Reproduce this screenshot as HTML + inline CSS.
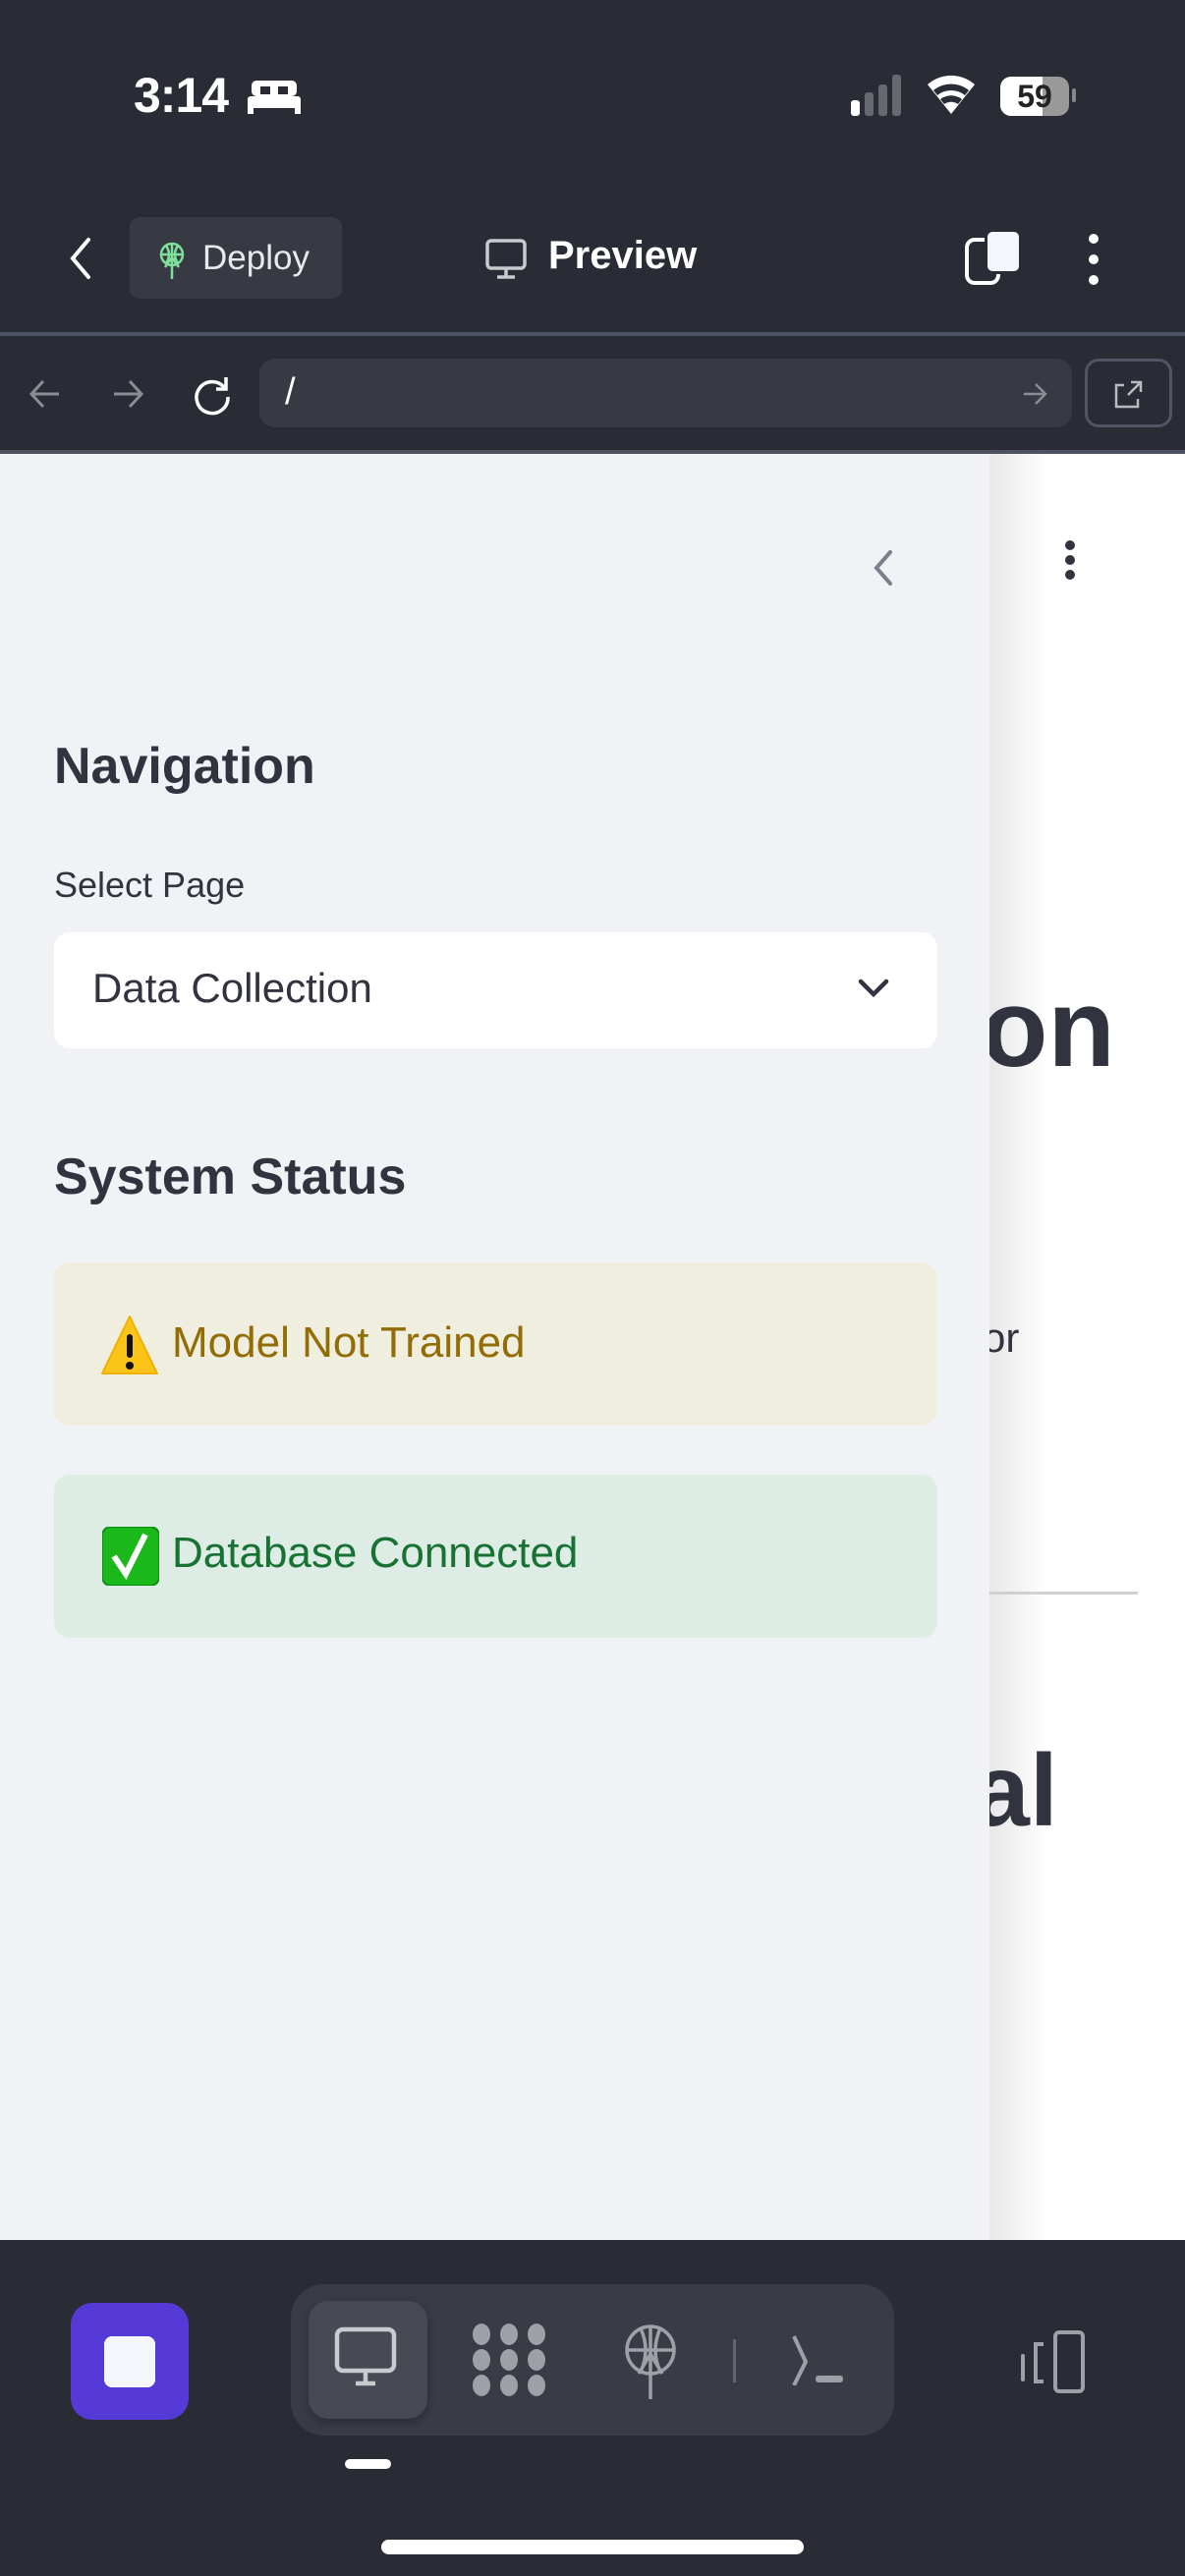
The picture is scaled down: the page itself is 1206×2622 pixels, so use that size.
<!DOCTYPE html>
<html><head><meta charset="utf-8"><style>
*{margin:0;padding:0;box-sizing:border-box}
body{width:1206px;height:2622px;overflow:hidden;background:#292c34;font-family:"Liberation Sans",sans-serif;position:relative}
.a{position:absolute}
.t{white-space:nowrap}
</style></head><body>
<!-- status bar -->
<div class="a t" style="left:136px;top:68px;font-size:50px;font-weight:bold;color:#fff;letter-spacing:-1px">3:14</div>
<svg class="a" style="left:252px;top:80px" width="54" height="38" viewBox="0 0 54 38"><rect x="4" y="2" width="46" height="16" rx="5" fill="#fff"/><rect x="13" y="8" width="10" height="8" fill="#292c34"/><rect x="31" y="8" width="10" height="8" fill="#292c34"/><rect x="0" y="18" width="54" height="12" rx="3" fill="#fff"/><rect x="0" y="26" width="6" height="10" fill="#fff"/><rect x="48" y="26" width="6" height="10" fill="#fff"/></svg>
<svg class="a" style="left:864px;top:74px" width="60" height="46"><rect x="2" y="28" width="9" height="16" rx="3" fill="#fff"/><rect x="16" y="20" width="9" height="24" rx="3" fill="#666a70"/><rect x="30" y="12" width="9" height="32" rx="3" fill="#666a70"/><rect x="44" y="2" width="9" height="42" rx="3" fill="#666a70"/></svg>
<svg class="a" style="left:942px;top:72px" width="52" height="46" viewBox="0 0 52 46"><path d="M26 44 L2 14 A36 36 0 0 1 50 14 Z" fill="#fff"/><path d="M8 20 A28 28 0 0 1 44 20 L40 25 A22 22 0 0 0 12 25Z" fill="#292c34"/><path d="M15 29 A18 18 0 0 1 37 29 L33 34 A12 12 0 0 0 19 34Z" fill="#292c34"/></svg>
<div class="a" style="left:1018px;top:78px;width:70px;height:40px;border-radius:11px;background:#999;overflow:hidden"><div style="width:43px;height:40px;background:#fff"></div></div>
<div class="a" style="left:1091px;top:90px;width:4px;height:14px;border-radius:2px;background:#888"></div>
<div class="a t" style="left:1018px;top:80px;width:70px;text-align:center;font-size:32px;font-weight:bold;color:#222">59</div>
<!-- toolbar -->
<svg class="a" style="left:66px;top:240px" width="30" height="46"><path d="M24 4 L8 23 L24 42" stroke="#fff" stroke-width="4" fill="none" stroke-linecap="round"/></svg>
<div class="a" style="left:132px;top:221px;width:216px;height:83px;border-radius:10px;background:#373a43"></div>
<svg class="a" style="left:160px;top:246px" width="30" height="40" viewBox="0 0 30 40"><circle cx="15" cy="13" r="11" stroke="#7ee19a" stroke-width="2.5" fill="none"/><path d="M4 13 H26 M15 2 V38 M9 4 Q15 13 9 22 M21 4 Q15 13 21 22 M8 26 L15 16 L22 26" stroke="#7ee19a" stroke-width="2.5" fill="none"/></svg>
<div class="a t" style="left:206px;top:243px;font-size:35px;color:#e8e9ec">Deploy</div>
<svg class="a" style="left:494px;top:243px" width="42" height="42"><rect x="2" y="2" width="38" height="28" rx="4" stroke="#c8cacd" stroke-width="3.5" fill="none"/><path d="M21 30 V38 M12 39 H30" stroke="#c8cacd" stroke-width="3.5"/></svg>
<div class="a t" style="left:558px;top:238px;font-size:40px;font-weight:bold;color:#fff">Preview</div>
<div class="a" style="left:982px;top:242px;width:36px;height:48px;border:4px solid #fff;border-radius:10px"></div>
<div class="a" style="left:1002px;top:233px;width:38px;height:46px;background:#f3f6fb;border-radius:8px;border:3px solid #292c34"></div>
<div class="a" style="left:1108px;top:238px;width:10px;height:10px;border-radius:50%;background:#fff;box-shadow:0 21px 0 #fff,0 42px 0 #fff"></div>
<div class="a" style="left:0;top:338px;width:1206px;height:4px;background:#4d5262"></div>
<!-- url row -->
<svg class="a" style="left:28px;top:384px" width="36" height="34"><path d="M32 17 H4 M16 4 L4 17 L16 30" stroke="#8a8d93" stroke-width="3" fill="none"/></svg>
<svg class="a" style="left:112px;top:384px" width="36" height="34"><path d="M4 17 H32 M20 4 L32 17 L20 30" stroke="#8a8d93" stroke-width="3" fill="none"/></svg>
<svg class="a" style="left:194px;top:380px" width="44" height="44"><path d="M34 14 A16 16 0 1 0 38 24" stroke="#fff" stroke-width="3.5" fill="none"/><path d="M36 4 V16 H26" stroke="#fff" stroke-width="3.5" fill="none"/></svg>
<div class="a" style="left:264px;top:365px;width:827px;height:70px;border-radius:16px;background:#373a43"></div>
<div class="a t" style="left:290px;top:378px;font-size:38px;color:#fff">/</div>
<svg class="a" style="left:1040px;top:388px" width="26" height="26"><path d="M2 13 H24 M14 3 L24 13 L14 23" stroke="#8a8d93" stroke-width="2.5" fill="none"/></svg>
<div class="a" style="left:1104px;top:365px;width:89px;height:70px;border-radius:14px;border:3px solid #505564"></div>
<svg class="a" style="left:1132px;top:386px" width="32" height="32"><path d="M12 6 H4 V28 H26 V20 M16 16 L29 3 M19 3 H29 V13" stroke="#b8bac0" stroke-width="2.5" fill="none"/></svg>
<div class="a" style="left:0;top:458px;width:1206px;height:4px;background:#4d5262"></div>
<!-- main page -->
<div class="a" style="left:0;top:462px;width:1206px;height:1818px;background:#fff;overflow:hidden">
 <div class="a" style="left:1007px;top:0;width:60px;height:1818px;background:linear-gradient(90deg,#e8e8ea,#fff)"></div>
 <div class="a" style="left:1084px;top:88px;width:10px;height:10px;border-radius:50%;background:#31333f;box-shadow:0 15px 0 #31333f,0 30px 0 #31333f"></div>
 <div class="a t" style="left:998px;top:520px;font-size:112px;font-weight:bold;color:#31333f">on</div>
 <div class="a t" style="left:1000px;top:876px;font-size:42px;color:#31333f">or</div>
 <div class="a" style="left:1007px;top:1158px;width:151px;height:3px;background:#d0d0d2"></div>
 <div class="a t" style="left:990px;top:1302px;font-size:104px;font-weight:bold;color:#31333f">al</div>
</div>
<!-- sidebar -->
<div class="a" style="left:0;top:462px;width:1007px;height:1818px;background:#f0f2f6">
 <svg class="a" style="left:886px;top:96px" width="26" height="40"><path d="M20 4 L6 20 L20 36" stroke="#7d808a" stroke-width="4" fill="none" stroke-linecap="round"/></svg>
 <div class="a t" style="left:55px;top:288px;font-size:52px;font-weight:bold;color:#31333f">Navigation</div>
 <div class="a t" style="left:55px;top:418px;font-size:36px;color:#31333f">Select Page</div>
 <div class="a" style="left:55px;top:487px;width:899px;height:118px;background:#fff;border-radius:16px"></div>
 <div class="a t" style="left:94px;top:520px;font-size:42px;color:#31333f">Data Collection</div>
 <svg class="a" style="left:872px;top:532px" width="34" height="24"><path d="M4 5 L17 18 L30 5" stroke="#31333f" stroke-width="4.5" fill="none" stroke-linecap="round"/></svg>
 <div class="a t" style="left:55px;top:706px;font-size:52px;font-weight:bold;color:#31333f">System Status</div>
 <div class="a" style="left:55px;top:823px;width:899px;height:166px;background:#f0efdf;border-radius:16px"></div>
 <svg class="a" style="left:102px;top:876px" width="60" height="62"><path d="M30 2 L58 60 H2 Z" fill="#fcc419" stroke="#f0b000" stroke-width="2" stroke-linejoin="round"/><rect x="27" y="20" width="6" height="24" rx="3" fill="#111"/><circle cx="30" cy="52" r="4" fill="#111"/></svg>
 <div class="a t" style="left:175px;top:880px;font-size:44px;color:#926c05">Model Not Trained</div>
 <div class="a" style="left:55px;top:1039px;width:899px;height:166px;background:#ddece4;border-radius:16px"></div>
 <svg class="a" style="left:104px;top:1092px" width="58" height="60"><rect x="0" y="0" width="58" height="60" rx="9" fill="#1ab81a" stroke="#109010" stroke-width="2"/><path d="M12 30 L24 48 L44 8" stroke="#fff" stroke-width="6" fill="none"/></svg>
 <div class="a t" style="left:175px;top:1094px;font-size:44px;color:#177233">Database Connected</div>
</div>
<!-- bottom bar -->
<div class="a" style="left:72px;top:2344px;width:120px;height:119px;border-radius:22px;background:#553ad8"></div>
<div class="a" style="left:106px;top:2378px;width:52px;height:52px;border-radius:8px;background:#f3f6fb"></div>
<div class="a" style="left:296px;top:2325px;width:614px;height:154px;border-radius:34px;background:#393c45"></div>
<div class="a" style="left:314px;top:2342px;width:121px;height:120px;border-radius:20px;background:#474a53;box-shadow:0 4px 10px rgba(0,0,0,.25)"></div>
<svg class="a" style="left:340px;top:2368px" width="66" height="64"><rect x="3" y="3" width="58" height="42" rx="6" stroke="#c8cacd" stroke-width="4.5" fill="none"/><path d="M32 45 V56 M22 58 H42" stroke="#c8cacd" stroke-width="4.5"/></svg>
<svg class="a" style="left:480px;top:2364px" width="76" height="76" viewBox="0 0 76 76" fill="#9da1a7"><ellipse cx="10" cy="12" rx="9" ry="11"/><ellipse cx="38" cy="12" rx="9" ry="11"/><ellipse cx="66" cy="12" rx="9" ry="11"/><ellipse cx="10" cy="38" rx="9" ry="11"/><ellipse cx="38" cy="38" rx="9" ry="11"/><ellipse cx="66" cy="38" rx="9" ry="11"/><ellipse cx="10" cy="64" rx="9" ry="11"/><ellipse cx="38" cy="64" rx="9" ry="11"/><ellipse cx="66" cy="64" rx="9" ry="11"/></svg>
<svg class="a" style="left:634px;top:2366px" width="56" height="76" viewBox="0 0 56 76"><circle cx="28" cy="26" r="24" stroke="#9da1a7" stroke-width="3.5" fill="none"/><path d="M4 26 H52 M28 2 V76 M18 4 Q28 26 18 48 M38 4 Q28 26 38 48 M16 50 L28 30 L40 50" stroke="#9da1a7" stroke-width="3.5" fill="none"/></svg>
<div class="a" style="left:746px;top:2381px;width:3px;height:44px;background:#5f6574"></div>
<svg class="a" style="left:804px;top:2376px" width="56" height="52"><path d="M4 2 L16 28 L4 52" stroke="#9da1a7" stroke-width="4" fill="none"/><rect x="26" y="42" width="28" height="7" rx="3" fill="#9da1a7"/></svg>
<svg class="a" style="left:1038px;top:2372px" width="72" height="64"><rect x="1" y="24" width="4" height="28" rx="2" fill="#9da1a7"/><path d="M24 14 H16 V52 H24" stroke="#9da1a7" stroke-width="4" fill="none"/><rect x="36" y="2" width="28" height="60" rx="4" stroke="#9da1a7" stroke-width="4" fill="none"/></svg>
<div class="a" style="left:351px;top:2503px;width:47px;height:10px;border-radius:5px;background:#fff"></div>
<div class="a" style="left:388px;top:2585px;width:430px;height:15px;border-radius:8px;background:#fff"></div>
</body></html>
